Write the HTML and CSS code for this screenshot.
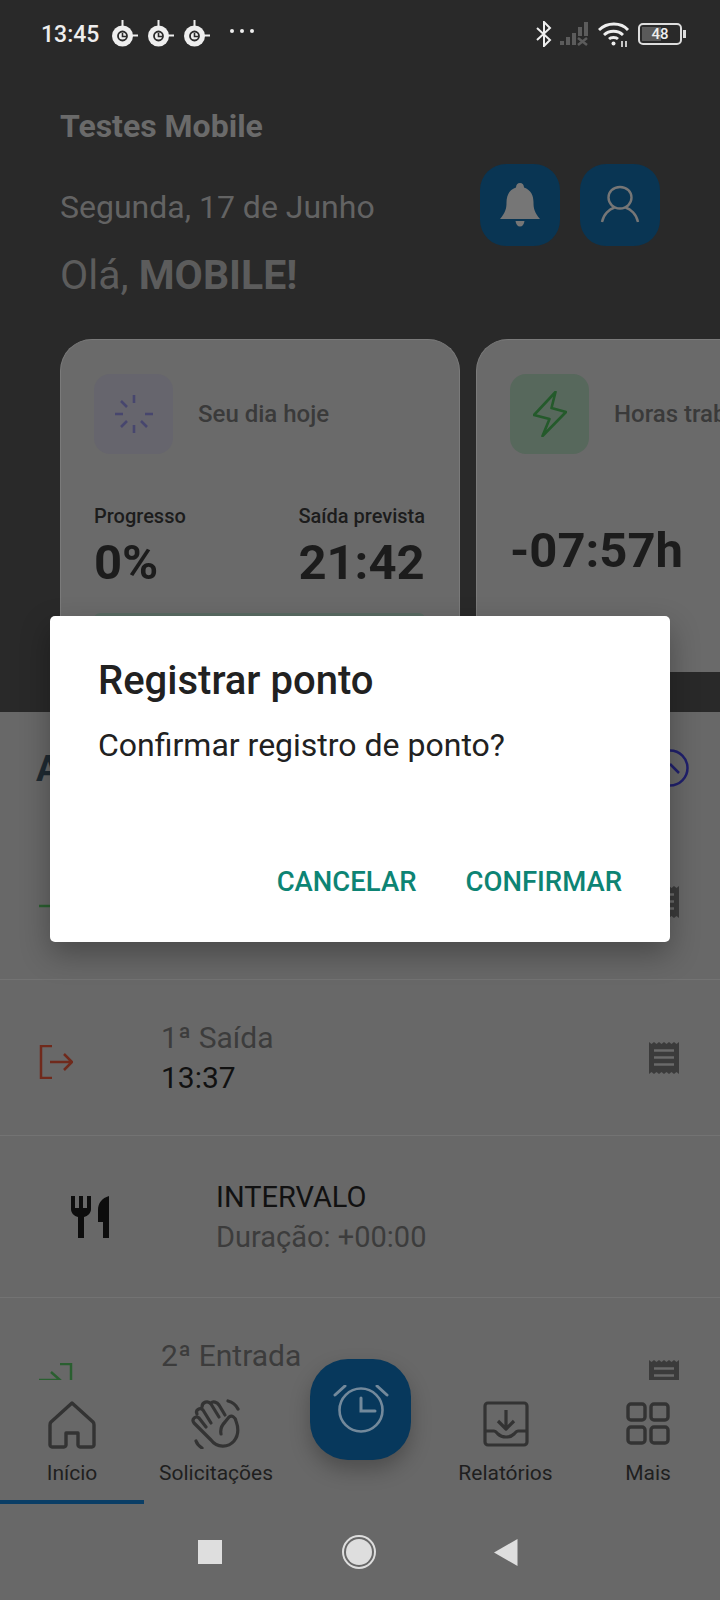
FILE: index.html
```html
<!DOCTYPE html>
<html lang="pt-BR">

<head>
    <meta charset="UTF-8" />
    <meta name="viewport" content="width=device-width, initial-scale=1.0" />
    <title>Testes Mobile</title>
    <link rel="stylesheet" href="styles.css">
</head>

<body>
    <svg class="hidden">
        <symbol id="alarmDot" viewBox="0 0 28 28">
            <path d="M11.500 0h2v8h-2zM20 14.500h8v2h-8z" fill="#eee" />
            <circle cx="12.500" cy="16" r="10.500" fill="#eee" />
            <circle cx="12.500" cy="16" r="4.500" fill="none" stroke="#2a2a2a" stroke-width="1.800" />
            <path d="M12.500 13v3.500h3.500" fill="none" stroke="#2a2a2a" stroke-width="1.600" />
        </symbol>
        <symbol id="receipt" viewBox="0 0 30 32">
            <path d="M0 0l2.500 2 2.500-2 2.500 2 2.500-2 2.500 2 2.500-2 2.500 2 2.500-2 2.500 2 2.500-2 2.500 2 2.500-2v32l-2.500-2-2.500 2-2.500-2-2.500 2-2.500-2-2.500 2-2.500-2-2.500 2-2.500-2-2.500 2-2.500-2-2.500 2z" fill="#3b3b3b" />
            <path d="M5 8.500h20M5 15.500h20M5 22.500h20" stroke="#6a6a6a" stroke-width="2.400" />
        </symbol>
        <symbol id="login" viewBox="0 0 34 34">
            <path d="M21 1h11v32H21" fill="none" stroke="#2a5f30" stroke-width="2.500" />
            <path d="M0 17h21M12 9l9 8-9 8" fill="none" stroke="#2a5f30" stroke-width="2.500" />
        </symbol>
    </svg>

    <div class="phone">
        <!-- Dark top area -->
        <header class="hero">
            <div class="status-bar">
                <span class="clock">13:45</span>
                <svg class="alarm-dot"><use href="#alarmDot" /></svg>
                <svg class="alarm-dot"><use href="#alarmDot" /></svg>
                <svg class="alarm-dot"><use href="#alarmDot" /></svg>
                <span class="dots"><i></i><i></i><i></i></span>
                <span class="status-right">
                    <svg width="16" height="26" viewBox="0 0 16 26" fill="none" stroke="#eee" stroke-width="2">
                        <path d="M1 7l13 12-6 6V1l6 6L1 19" />
                    </svg>
                    <svg width="30" height="24" viewBox="0 0 30 24" fill="#5c5c5c">
                        <path d="M0 19h4v4H0zM6 15h4v8H6zM12 11h4v12h-4zM18 5h4v9h-4zM24 0h4v14h-4z" />
                        <path d="M18 16l9 7M27 16l-9 7" stroke="#5c5c5c" stroke-width="2.500" />
                    </svg>
                    <svg width="32" height="26" viewBox="0 0 32 26" fill="none" stroke="#eee" stroke-width="2.800">
                        <path d="M1 9c8-8 22-8 29 0M6 14c5-5 14-5 19 0M11 18c2-2 7-2 9 0" />
                        <circle cx="15.500" cy="22.500" r="2" fill="#eee" stroke="none" />
                        <path d="M24 20v6M28 20v6" stroke-width="1.600" />
                    </svg>
                    <span class="battery"><span class="battery-fill"></span><span class="battery-num">48</span></span>
                </span>
            </div>

            <div class="hero-main">
                <div class="hero-text">
                    <h1 class="company">Testes Mobile</h1>
                    <p class="today">Segunda, 17 de Junho</p>
                    <p class="hello">Olá, <b>MOBILE!</b></p>
                </div>
                <div class="hero-buttons">
                    <div class="square-btn">
                        <svg width="40" height="44" viewBox="0 0 40 44" fill="#767676">
                            <path d="M20 0c2.500 0 4 2 4 4.500 7 2.500 9.500 8 9.500 15 0 6 1 10 6.500 16.500H0c5.500-6.500 6.500-10.500 6.500-16.500 0-7 2.500-12.500 9.500-15C16 2 17.500 0 20 0zM15.500 38h9c-.5 3.500-2 5.500-4.500 5.500s-4-2-4.500-5.500z" />
                        </svg>
                    </div>
                    <div class="square-btn">
                        <svg width="40" height="40" viewBox="0 0 40 40" fill="none" stroke="#767676" stroke-width="2.400">
                            <path d="M20 2c7 0 11.500 5 11.500 10.500S27 23.500 20 23.500 8.500 18 8.500 12.500 13 2 20 2z" />
                            <path d="M2 37c1.500-8 7.500-13 12.500-14.500M38 37c-1.500-8-7.500-13-12.500-14.500" />
                        </svg>
                    </div>
                </div>
            </div>

            <div class="cards">
                <section class="card">
                    <div class="card-head">
                        <div class="tile tile-purple">
                            <svg width="40" height="40" viewBox="0 0 40 40" stroke="#47466e" stroke-width="2.600">
                                <path d="M20 1v8M20 31v8M1 20h8M31 20h8M7 7l6 6M33 33l-6-6M7 33l6-6" />
                            </svg>
                        </div>
                        <span class="card-title">Seu dia hoje</span>
                    </div>
                    <div class="day-stats">
                        <div>
                            <div class="stat-label">Progresso</div>
                            <div class="stat-value">0%</div>
                        </div>
                        <div>
                            <div class="stat-label">Saída prevista</div>
                            <div class="stat-value">21:42</div>
                        </div>
                    </div>
                    <div class="progress"></div>
                </section>

                <section class="card">
                    <div class="card-head">
                        <div class="tile tile-green">
                            <svg width="34" height="46" viewBox="0 0 34 46" fill="none" stroke="#245a2b" stroke-width="2.600" stroke-linejoin="round">
                                <path d="M22.500 1L1 24l15.500 4-7 17L33 21l-14.500-4z" />
                            </svg>
                        </div>
                        <span class="card-title">Horas trabalhadas</span>
                    </div>
                    <div class="hours">-07:57h</div>
                </section>
            </div>
        </header>

        <!-- Day list -->
        <main class="day-list">
            <div class="list-head">
                <h2>A</h2>
                <svg width="40" height="40" viewBox="0 0 40 40" fill="none" stroke="#20206c" stroke-width="2.500">
                    <circle cx="20" cy="20" r="17.500" />
                    <path d="M20 16l9 9" />
                </svg>
            </div>

            <div class="row">
                <svg class="row-icon"><use href="#login" /></svg>
                <div class="row-text"></div>
                <svg class="receipt"><use href="#receipt" /></svg>
            </div>
            <div class="row">
                <svg class="row-icon" viewBox="0 0 34 34" fill="none" stroke="#702a1c" stroke-width="2.500">
                    <path d="M13 1H2v32h11" />
                    <path d="M11 17h22M25 9l8 8-8 8" />
                </svg>
                <div class="row-text">
                    <div class="row-label">1ª Saída</div>
                    <div class="row-time">13:37</div>
                </div>
                <svg class="receipt"><use href="#receipt" /></svg>
            </div>
            <div class="row row-break">
                <svg class="fork" width="38" height="42" viewBox="0 0 38 42" fill="#0d0d0d">
                    <path d="M0 0h4v12h4V0h4v12h4V0h4v13c0 4-3 7-7 8v21H7V21C3 20 0 17 0 13z" />
                    <path d="M38 0v42h-6V26h-5V14C27 7 31 2 38 0z" />
                </svg>
                <div class="row-text">
                    <div class="row-title">INTERVALO</div>
                    <div class="row-label">Duração: +00:00</div>
                </div>
            </div>
            <div class="row">
                <svg class="row-icon"><use href="#login" /></svg>
                <div class="row-text">
                    <div class="row-label">2ª Entrada</div>
                </div>
                <svg class="receipt"><use href="#receipt" /></svg>
            </div>
        </main>

        <!-- Bottom tabs -->
        <nav class="tabs">
            <div class="tab active">
                <svg width="48" height="48" viewBox="0 0 48 48" fill="none" stroke="#333" stroke-width="3.400" stroke-linejoin="round">
                    <path d="M24 2L3 21c-1 1-1 2-1 3v20c0 1 1 2 2 2h12c1 0 2-1 2-2V32h12v12c0 1 1 2 2 2h12c1 0 2-1 2-2V24c0-1 0-2-1-3z" />
                </svg>
                <span>Início</span>
            </div>
            <div class="tab">
                <svg width="50" height="50" viewBox="0 0 50 50" fill="none" stroke="#333" stroke-width="3.200" stroke-linecap="round" stroke-linejoin="round">
                    <path d="M30 35c-1-5 1-9 4-12l4-5c3-2 6 0 7 4 3 8 2 15-2 20-6 7-17 7-23-1L3 24c-3-4 2-8 5-5l7 9" />
                    <path d="M6 15c-2-4 3-7 6-4l8 13M11 8c0-5 6-7 9-3l8 13M20 4c2-2 6-1 8 2l6 10" />
                    <path d="M37 2c4 1 8 4 10 8M5 42c1 3 3 5 6 7" />
                </svg>
                <span>Solicitações</span>
            </div>
            <div class="tab tab-spacer"></div>
            <div class="tab tab-report">
                <svg width="46" height="46" viewBox="0 0 46 46" fill="none" stroke="#333" stroke-width="3.200" stroke-linejoin="round">
                    <rect x="2" y="2" width="42" height="42" rx="3" />
                    <path d="M2 30h9c2 0 3 2 4 3 2 2 5 3 8 3s6-1 8-3c1-1 2-3 4-3h9" />
                    <path d="M23 9v18M15 20l8 8 8-8" />
                </svg>
                <span>Relatórios</span>
            </div>
            <div class="tab tab-more">
                <svg width="44" height="43" viewBox="0 0 44 43" fill="none" stroke="#333" stroke-width="3.400">
                    <rect x="2" y="2" width="17" height="16" rx="3" />
                    <rect x="25" y="2" width="17" height="16" rx="3" />
                    <rect x="2" y="25" width="17" height="16" rx="3" />
                    <rect x="25" y="25" width="17" height="16" rx="3" />
                </svg>
                <span>Mais</span>
            </div>
            <div class="fab">
                <svg width="56" height="50" viewBox="0 0 56 50" fill="none" stroke="#73899b" stroke-width="2.600" stroke-linecap="round">
                    <circle cx="28" cy="25" r="21.500" />
                    <path d="M28 13v13h14" stroke-width="3" />
                    <path d="M2 10l10-9M54 10L44 1" stroke-width="3" />
                </svg>
            </div>
        </nav>

        <!-- Android buttons -->
        <div class="system-nav">
            <span class="sys-square"></span>
            <span class="sys-circle"></span>
            <svg width="24" height="27" viewBox="0 0 24 27" fill="#dedede">
                <path d="M23.500 0v27L0 13.500z" />
            </svg>
        </div>

        <!-- Confirm dialog -->
        <div class="dialog">
            <h3>Registrar ponto</h3>
            <p>Confirmar registro de ponto?</p>
            <div class="dialog-actions">
                <span>CANCELAR</span>
                <span>CONFIRMAR</span>
            </div>
        </div>
    </div>
</body>

</html>
```

FILE: styles.css
```css
/* General styling */
body {
    margin: 0;
    font-family: Roboto, "Noto Sans", sans-serif;
    background-color: #686868;
}

.hidden {
    display: none;
}

.phone {
    position: relative;
    width: 720px;
    height: 1600px;
    overflow: hidden;
    display: flex;
    flex-direction: column;
    background-color: #686868;
}

/* Dark header */
.hero {
    height: 712px;
    flex-shrink: 0;
    background-color: #292929;
    overflow: hidden;
}

.status-bar {
    height: 68px;
    display: flex;
    align-items: center;
    padding-left: 41px;
    margin-bottom: 2px;
    color: #eee;
}

.clock {
    width: 69px;
    font-size: 23px;
    font-weight: 500;
}

.alarm-dot {
    width: 28px;
    height: 28px;
    margin-right: 8px;
}

.dots {
    display: flex;
    gap: 6px;
    margin-left: 12px;
    margin-bottom: 6px;
}

.dots i {
    width: 4px;
    height: 4px;
    background-color: #eee;
    border-radius: 50%;
}

.status-right {
    margin-left: auto;
    margin-right: 38px;
    display: flex;
    align-items: center;
    gap: 8px;
}

.battery {
    position: relative;
    width: 40px;
    height: 18px;
    border: 2px solid #ddd;
    border-radius: 5px;
    display: flex;
    align-items: center;
    justify-content: center;
    font-size: 15px;
    font-weight: 500;
}

.battery::after {
    content: "";
    position: absolute;
    right: -6px;
    top: 5px;
    width: 3px;
    height: 8px;
    background-color: #ddd;
}

.battery-fill {
    position: absolute;
    left: 2px;
    top: 2px;
    bottom: 2px;
    width: 19px;
    background-color: #5a5a5a;
}

.battery-num {
    position: relative;
}

.hero-main {
    display: flex;
    justify-content: space-between;
    padding: 38px 60px 0 60px;
    height: 243px;
    box-sizing: border-box;
}

.company {
    margin: 0;
    font-size: 32px;
    line-height: 36px;
    font-weight: 700;
    color: #6a6a6a;
}

.today {
    margin: 43px 0 0;
    font-size: 32px;
    line-height: 40px;
    color: #636363;
}

.hello {
    margin: 25px 0 0;
    font-size: 41px;
    line-height: 46px;
    color: #5c5c5c;
}

.hero-buttons {
    display: flex;
    gap: 20px;
    margin-top: 56px;
}

.square-btn {
    width: 80px;
    height: 82px;
    border-radius: 26px;
    background-color: #093553;
    display: flex;
    align-items: center;
    justify-content: center;
}

/* Summary cards */
.cards {
    display: flex;
    gap: 16px;
    padding-left: 60px;
    margin-top: 26px;
}

.card {
    width: 400px;
    height: 333px;
    flex-shrink: 0;
    box-sizing: border-box;
    padding: 34px 34px 0 33px;
    background-color: #6a6a6a;
    border: 1px solid #7a7a7a;
    border-bottom: none;
    border-radius: 32px 32px 0 0;
}

.card-head {
    display: flex;
    align-items: center;
    gap: 25px;
}

.tile {
    width: 79px;
    height: 80px;
    flex-shrink: 0;
    border-radius: 16px;
    display: flex;
    align-items: center;
    justify-content: center;
}

.tile-purple {
    background-color: #66656d;
}

.tile-green {
    background-color: #57685c;
}

.card-title {
    font-size: 24px;
    font-weight: 500;
    white-space: nowrap;
    color: #3a3a3a;
}

.day-stats {
    display: flex;
    justify-content: space-between;
    margin-top: 49px;
}

.stat-label {
    font-size: 20px;
    line-height: 26px;
    font-weight: 500;
    color: #1c1c1c;
}

.stat-value {
    margin-top: 6px;
    font-size: 49px;
    line-height: 56px;
    font-weight: 700;
    color: #1c1c1c;
}

.progress {
    height: 12px;
    margin-top: 22px;
    border-radius: 6px 6px 0 0;
    background-color: #5a6b63;
}

.hours {
    margin-top: 69px;
    font-size: 49px;
    line-height: 56px;
    font-weight: 700;
    color: #1c1c1c;
}

/* List of the day */
.day-list {
    height: 668px;
    flex-shrink: 0;
    overflow: hidden;
}

.list-head {
    height: 112px;
    display: flex;
    justify-content: space-between;
    padding: 36px 30px 0 36px;
    box-sizing: border-box;
}

.list-head h2 {
    margin: 0;
    font-size: 36px;
    line-height: 42px;
    font-weight: 700;
    color: #1f2a32;
}

.row {
    height: 156px;
    box-sizing: border-box;
    display: flex;
    align-items: center;
    padding: 0 41px 0 39px;
    border-bottom: 1px solid #737373;
}

.row-icon {
    width: 34px;
    height: 34px;
    flex-shrink: 0;
    margin-top: 8px;
    margin-right: 88px;
}

.row-text {
    flex: 1;
    min-height: 80px;
}

.row-label {
    font-size: 30px;
    line-height: 40px;
    color: #3c3c3c;
}

.row-time {
    font-size: 30px;
    line-height: 40px;
    color: #111;
}

.row-break {
    height: 162px;
    padding-left: 71px;
}

.row-title {
    font-size: 29px;
    line-height: 40px;
    color: #111;
}

.row-break .row-label {
    font-size: 29px;
}

.receipt {
    width: 30px;
    height: 32px;
    flex-shrink: 0;
}

.fork {
    flex-shrink: 0;
    margin-right: 107px;
}

/* Bottom tabs */
.tabs {
    position: relative;
    height: 124px;
    flex-shrink: 0;
    display: flex;
}

.tab {
    width: 144px;
    height: 124px;
    box-sizing: border-box;
    display: flex;
    flex-direction: column;
    align-items: center;
    justify-content: flex-end;
    gap: 11px;
    padding-bottom: 18px;
    font-size: 21px;
    color: #1f1f1f;
}

.tab span {
    line-height: 26px;
}

.tab.active {
    border-bottom: 4px solid #0a3e66;
    padding-bottom: 14px;
}

.tab-report {
    padding-left: 3px;
    gap: 13px;
}

.tab-more {
    gap: 15px;
}

.fab {
    position: absolute;
    left: 310px;
    top: -21px;
    width: 101px;
    height: 101px;
    border-radius: 38px;
    background-color: #07385c;
    box-shadow: 0 10px 20px rgba(0, 0, 0, 0.25);
    display: flex;
    align-items: center;
    justify-content: center;
}

/* Android navigation */
.system-nav {
    flex: 1;
    display: flex;
    align-items: center;
    padding: 0 0 0 198px;
}

.sys-square {
    width: 24px;
    height: 24px;
    background-color: #dedede;
    margin-right: 124px;
}

.sys-circle {
    width: 26px;
    height: 26px;
    border-radius: 50%;
    background-color: #dedede;
    box-shadow: 0 0 0 2px #686868, 0 0 0 4px #dedede;
    margin-right: 122px;
}

/* Dialog */
.dialog {
    position: absolute;
    left: 50px;
    top: 616px;
    width: 620px;
    height: 326px;
    box-sizing: border-box;
    padding: 43px 48px 0 48px;
    background-color: #fff;
    border-radius: 5px;
    box-shadow: 0 12px 30px rgba(0, 0, 0, 0.3);
}

.dialog h3 {
    margin: 0;
    font-size: 40px;
    line-height: 44px;
    font-weight: 500;
    color: #212121;
}

.dialog p {
    margin: 22px 0 0;
    font-size: 32px;
    line-height: 40px;
    color: #212121;
}

.dialog-actions {
    display: flex;
    justify-content: flex-end;
    gap: 49px;
    margin-top: 101px;
    font-size: 27.500px;
    line-height: 32px;
    font-weight: 500;
    color: #0d8474;
}
```
